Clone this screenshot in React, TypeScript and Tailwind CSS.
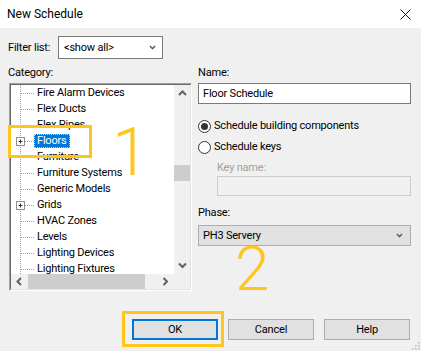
import React from "react";

const items = [
  { label: "Fire Alarm Devices" },
  { label: "Flex Ducts" },
  { label: "Flex Pipes" },
  { label: "Floors", plus: true, selected: true },
  { label: "Furniture" },
  { label: "Furniture Systems" },
  { label: "Generic Models" },
  { label: "Grids", plus: true },
  { label: "HVAC Zones" },
  { label: "Levels" },
  { label: "Lighting Devices" },
  { label: "Lighting Fixtures" },
];

const Chevron = ({ dir, className }: { dir: "up" | "down" | "left" | "right"; className?: string }) => {
  const d = {
    up: "M1 5 L4.5 1.5 L8 5",
    down: "M1 1.5 L4.5 5 L8 1.5",
    left: "M5 1 L1.5 4.5 L5 8",
    right: "M1.5 1 L5 4.5 L1.5 8",
  }[dir];
  const vertical = dir === "up" || dir === "down";
  return (
    <svg
      width={vertical ? 9 : 7}
      height={vertical ? 7 : 9}
      viewBox={vertical ? "0 0 9 7" : "0 0 7 9"}
      className={className}
    >
      <path d={d} fill="none" stroke="#606060" strokeWidth="2" />
    </svg>
  );
};

const TreeRow = ({ label, plus, selected }: { label: string; plus?: boolean; selected?: boolean }) => (
  <div className="h-[16px] flex items-center shrink-0">
    <svg width="23" height="16" className="shrink-0">
      <line x1="9.5" y1="0" x2="9.5" y2="16" stroke="#a0a0a0" strokeDasharray="1 1" />
      <line x1="10" y1="8.5" x2="23" y2="8.5" stroke="#a0a0a0" strokeDasharray="1 1" />
      {plus && (
        <>
          <rect x="5.5" y="4.5" width="8" height="8" fill="white" stroke="#919191" />
          <line x1="7.5" y1="8.5" x2="11.5" y2="8.5" stroke="#333" />
          <line x1="9.5" y1="6.5" x2="9.5" y2="10.5" stroke="#333" />
        </>
      )}
    </svg>
    <span
      className={
        selected
          ? "h-[14px] flex items-center px-[2px] bg-[#0078d7] text-white border border-dotted border-[#f5c57a] whitespace-nowrap"
          : "h-[14px] flex items-center px-[3px] whitespace-nowrap"
      }
    >
      {label}
    </span>
  </div>
);

const Radio = ({ checked, label }: { checked?: boolean; label: string }) => (
  <div className="h-[16px] flex items-center gap-[3px]">
    <span className="w-[13px] h-[13px] rounded-full border border-[#333] bg-white flex items-center justify-center">
      {checked && <span className="w-[7px] h-[7px] rounded-full bg-[#333]" />}
    </span>
    <span>{label}</span>
  </div>
);

export default function App() {
  return (
    <div className="relative w-[421px] h-[351px] overflow-hidden bg-[#f0f0f0] text-[11px] tracking-[-0.2px] leading-[16px] text-black font-['Roboto',sans-serif]">
      {/* title bar */}
      <div className="h-[28px] bg-white flex items-center justify-between pl-[7px] pr-[10px]">
        <span className="text-[12px] tracking-normal">New Schedule</span>
        <svg width="11" height="11" viewBox="0 0 11 11">
          <path d="M0.5 0.5 L10.5 10.5 M10.5 0.5 L0.5 10.5" stroke="#111" strokeWidth="1" />
        </svg>
      </div>

      {/* filter */}
      <div className="mt-[8px] pl-[8px] flex items-center">
        <span className="w-[50px]">Filter list:</span>
        <div className="w-[105px] h-[23px] bg-white border border-[#7a7a7a] flex items-center justify-between pl-[5px] pr-[5px]">
          <span>&lt;show all&gt;</span>
          <Chevron dir="down" className="scale-75" />
        </div>
      </div>

      {/* main */}
      <div className="mt-[6px] flex pl-[8px]">
        <div className="w-[184px] flex flex-col">
          <span className="h-[16px]">Category:</span>
          <div className="mt-[2px] ml-[1px] w-[183px] h-[208px] border border-t-[#a0a0a0] border-l-[#a0a0a0] border-r-white border-b-white">
            <div className="w-full h-full border border-t-[#696969] border-l-[#696969] border-r-[#e3e3e3] border-b-[#e3e3e3] flex flex-col bg-white">
              <div className="flex h-[189px]">
                <div className="flex-1 overflow-hidden flex flex-col">
                  {items.map((it) => (
                    <TreeRow key={it.label} {...it} />
                  ))}
                </div>
                <div className="w-[16px] bg-[#f0f0f0] flex flex-col">
                  <div className="h-[17px] flex items-center justify-center">
                    <Chevron dir="up" />
                  </div>
                  <div className="flex-1">
                    <div className="mt-[63px] h-[16px] bg-[#cdcdcd]" />
                  </div>
                  <div className="h-[17px] flex items-center justify-center">
                    <Chevron dir="down" />
                  </div>
                </div>
              </div>
              <div className="flex h-[15px] bg-[#f0f0f0]">
                <div className="flex-1 flex">
                  <div className="w-[17px] flex items-center justify-center">
                    <Chevron dir="left" />
                  </div>
                  <div className="flex-1 flex">
                    <div className="w-[117px] bg-[#cdcdcd]" />
                  </div>
                  <div className="w-[17px] flex items-center justify-center">
                    <Chevron dir="right" />
                  </div>
                </div>
                <div className="w-[16px]" />
              </div>
            </div>
          </div>
        </div>

        <div className="ml-[6px] w-[213px] flex flex-col">
          <span className="h-[16px]">Name:</span>
          <div className="mt-[2px] h-[21px] bg-white border border-[#7a7a7a] flex items-center pl-[4px]">
            Floor Schedule
          </div>
          <div className="mt-[14px]">
            <Radio checked label="Schedule building components" />
          </div>
          <div className="mt-[5px]">
            <Radio label="Schedule keys" />
          </div>
          <span className="mt-[5px] pl-[19px] h-[16px] text-[#a0a0a0]">Key name:</span>
          <div className="ml-[19px] h-[20px] bg-[#f0f0f0] border border-[#cccccc]" />
          <span className="mt-[9px] h-[16px]">Phase:</span>
          <div className="mt-[4px] h-[21px] bg-[#e1e1e1] border border-[#adadad] flex items-center justify-between pl-[4px] pr-[6px]">
            <span>PH3 Servery</span>
            <Chevron dir="down" className="scale-75" />
          </div>
        </div>
      </div>

      {/* buttons */}
      <div className="mt-[28px] flex justify-end gap-[10px] pr-[11px]">
        <button className="w-[86px] h-[21px] bg-[#e1e1e1] border-2 border-[#0078d7] flex items-center justify-center">
          OK
        </button>
        <button className="w-[86px] h-[21px] bg-[#e1e1e1] border border-[#adadad] flex items-center justify-center">
          Cancel
        </button>
        <button className="w-[86px] h-[21px] bg-[#e1e1e1] border border-[#adadad] flex items-center justify-center">
          Help
        </button>
      </div>

      {/* size grip */}
      <svg width="10" height="10" className="absolute right-[1px] bottom-[1px]">
        {[
          [8, 2], [8, 5], [8, 8], [5, 5], [5, 8], [2, 8],
        ].map(([x, y]) => (
          <rect key={`${x}-${y}`} x={x} y={y} width="1.5" height="1.5" fill="#b8b8b8" />
        ))}
      </svg>

      {/* annotations */}
      <div className="absolute left-[8px] top-[125px] w-[84px] h-[33px] border-[3px] border-[#ffc61a]" />
      <span className="absolute left-[112px] top-[113px] text-[66px] leading-[80px] font-light text-[#ffc61a]">1</span>
      <span className="absolute left-[235px] top-[231px] text-[62px] leading-[76px] font-light text-[#ffc61a]">2</span>
      <div className="absolute left-[122px] top-[311px] w-[102px] h-[36px] border-[3px] border-[#ffc61a]" />
    </div>
  );
}
